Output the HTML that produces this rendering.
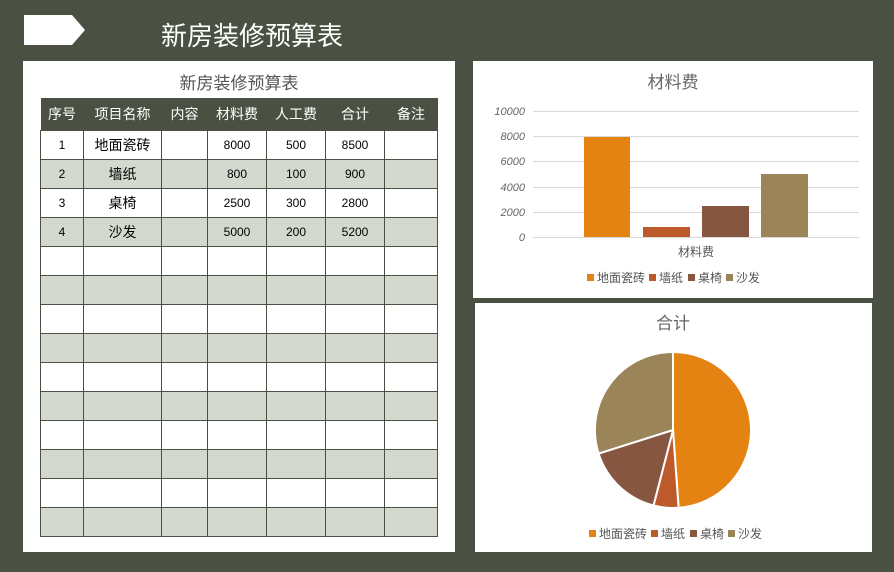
<!DOCTYPE html>
<html><head><meta charset="utf-8"><style>
body{margin:0;width:894px;height:572px;background:#4a5142;position:relative;overflow:hidden;font-family:"Liberation Sans","Noto Sans CJK SC",sans-serif}
.abs{position:absolute}
table{border-collapse:collapse;position:absolute;left:40px;top:98px;table-layout:fixed}
td{border:1px solid #4a5142;height:28px;padding:0;text-align:center;font-size:12px;color:#000}
th{background:#4a5142;color:#fff;font-weight:normal;font-size:14px;height:32px;padding:0}
tr.g td{background:#d3d9cf}
</style></head><body>
<svg class="abs" style="left:24px;top:15px" width="62" height="30"><polygon points="0,0 48,0 61,15 48,30 0,30" fill="#fff"/></svg>
<div class="abs" style="left:161px;top:16px;font-size:26px;color:#fff">新房装修预算表</div>
<div class="abs" style="left:23px;top:61px;width:432px;height:491px;background:#fff"></div>
<div class="abs" style="left:23px;top:69px;width:432px;text-align:center;font-size:17px;color:#555">新房装修预算表</div>
<table>
<colgroup><col style="width:43px"><col style="width:78px"><col style="width:46px"><col style="width:59px"><col style="width:59px"><col style="width:59px"><col style="width:53px"></colgroup>
<tr><th>序号</th><th>项目名称</th><th>内容</th><th>材料费</th><th>人工费</th><th>合计</th><th>备注</th></tr>
<tr><td>1</td><td style="font-size:14px">地面瓷砖</td><td></td><td>8000</td><td>500</td><td>8500</td><td></td></tr>
<tr class="g"><td>2</td><td style="font-size:14px">墙纸</td><td></td><td>800</td><td>100</td><td>900</td><td></td></tr>
<tr><td>3</td><td style="font-size:14px">桌椅</td><td></td><td>2500</td><td>300</td><td>2800</td><td></td></tr>
<tr class="g"><td>4</td><td style="font-size:14px">沙发</td><td></td><td>5000</td><td>200</td><td>5200</td><td></td></tr>
<tr><td></td><td></td><td></td><td></td><td></td><td></td><td></td></tr>
<tr class="g"><td></td><td></td><td></td><td></td><td></td><td></td><td></td></tr>
<tr><td></td><td></td><td></td><td></td><td></td><td></td><td></td></tr>
<tr class="g"><td></td><td></td><td></td><td></td><td></td><td></td><td></td></tr>
<tr><td></td><td></td><td></td><td></td><td></td><td></td><td></td></tr>
<tr class="g"><td></td><td></td><td></td><td></td><td></td><td></td><td></td></tr>
<tr><td></td><td></td><td></td><td></td><td></td><td></td><td></td></tr>
<tr class="g"><td></td><td></td><td></td><td></td><td></td><td></td><td></td></tr>
<tr><td></td><td></td><td></td><td></td><td></td><td></td><td></td></tr>
<tr class="g"><td></td><td></td><td></td><td></td><td></td><td></td><td></td></tr>
</table>
<svg class="abs" style="left:473px;top:61px" width="400" height="237">
<rect width="400" height="237" fill="#fff"/>
<text x="200" y="27" font-size="17" fill="#666" text-anchor="middle">材料费</text>
<g stroke="#d9d9d9" stroke-width="1">
<line x1="60" x2="386" y1="50.5" y2="50.5"/><line x1="60" x2="386" y1="75.5" y2="75.5"/><line x1="60" x2="386" y1="100.5" y2="100.5"/><line x1="60" x2="386" y1="126.5" y2="126.5"/><line x1="60" x2="386" y1="151.5" y2="151.5"/><line x1="60" x2="386" y1="176.5" y2="176.5"/></g>
<g font-size="11" fill="#666" text-anchor="end" font-style="italic">
<text x="52" y="54">10000</text><text x="52" y="79">8000</text><text x="52" y="104">6000</text><text x="52" y="130">4000</text><text x="52" y="155">2000</text><text x="52" y="180">0</text></g>
<rect x="111" y="76" width="46" height="100" fill="#e58312"/>
<rect x="170" y="166" width="47" height="10" fill="#bc5a2c"/>
<rect x="229" y="145" width="47" height="31" fill="#875640"/>
<rect x="288" y="113" width="47" height="63" fill="#9b8457"/>
<text x="223" y="195" font-size="12" fill="#555" text-anchor="middle">材料费</text>
<g font-size="12" fill="#555"><rect x="114" y="213" width="7" height="7" fill="#e58312"/><text x="124" y="221">地面瓷砖</text>
<rect x="176" y="213" width="7" height="7" fill="#bc5a2c"/><text x="186" y="221">墙纸</text>
<rect x="215" y="213" width="7" height="7" fill="#875640"/><text x="225" y="221">桌椅</text>
<rect x="253" y="213" width="7" height="7" fill="#9b8457"/><text x="263" y="221">沙发</text></g>
</svg>
<svg class="abs" style="left:475px;top:303px" width="397" height="249">
<rect width="397" height="249" fill="#fff"/>
<text x="198" y="26" font-size="17" fill="#666" text-anchor="middle">合计</text>
<g transform="translate(-475,-303)" stroke="#fff" stroke-width="2">
<path d="M673,430 L673,352 A78,78 0 0 1 678.6,507.8 Z" fill="#e58312"/>
<path d="M673,430 L678.6,507.8 A78,78 0 0 1 653.5,505.5 Z" fill="#bc5a2c"/>
<path d="M673,430 L653.5,505.5 A78,78 0 0 1 598.6,453.6 Z" fill="#875640"/>
<path d="M673,430 L598.6,453.6 A78,78 0 0 1 673,352 Z" fill="#9b8457"/>
</g>
<g font-size="12" fill="#555"><rect x="114" y="227" width="7" height="7" fill="#e58312"/><text x="124" y="235">地面瓷砖</text>
<rect x="176" y="227" width="7" height="7" fill="#bc5a2c"/><text x="186" y="235">墙纸</text>
<rect x="215" y="227" width="7" height="7" fill="#875640"/><text x="225" y="235">桌椅</text>
<rect x="253" y="227" width="7" height="7" fill="#9b8457"/><text x="263" y="235">沙发</text></g>
</svg>
</body></html>
